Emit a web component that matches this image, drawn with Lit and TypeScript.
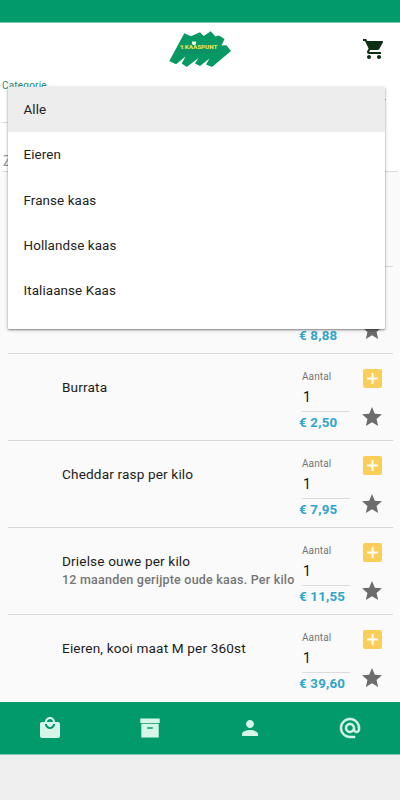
import { LitElement, html, css, svg } from "lit";
import { customElement, property } from "lit/decorators.js";

const icons = {
  cart: svg`<path d="M7 18c-1.1 0-1.99.9-1.99 2S5.900 22 7 22s2-.9 2-2-.9-2-2-2zM1 2v2h2l3.600 7.590-1.350 2.450c-.16.28-.25.61-.25.960 0 1.100.9 2 2 2h12v-2H7.420c-.14 0-.25-.11-.25-.25l.03-.12.900-1.630h7.450c.75 0 1.410-.41 1.750-1.030l3.580-6.490A1 1 0 0 0 20 4H5.210l-.94-2H1zm16 16c-1.100 0-1.990.9-1.990 2s.89 2 1.990 2 2-.9 2-2-.9-2-2-2z"/>`,
  bag: svg`<path d="M20 6h-3c0-2.760-2.240-5-5-5S7 3.240 7 6H4c-1.100 0-1.990.9-1.990 2v12c0 1.100.9 2 2 2h16c1.100 0 2-.9 2-2V8c0-1.100-.9-2-2-2zm-8-3c1.660 0 3 1.340 3 3H9c0-1.660 1.340-3 3-3zm0 10c-2.760 0-5-2.240-5-5h2c0 1.660 1.340 3 3 3s3-1.340 3-3h2c0 2.760-2.240 5-5 5z"/>`,
  archive: svg`<path d="M2.300 2.500h19.400v4.600H2.300zM3.300 7.700v13.800h17.400V7.700zm11.500 5H9.200v-1.500h5.600z"/>`,
  person: svg`<path d="M12 12c2.210 0 4-1.790 4-4s-1.790-4-4-4-4 1.790-4 4 1.790 4 4 4zm0 2c-2.670 0-8 1.340-8 4v2h16v-2c0-2.660-5.330-4-8-4z"/>`,
  at: svg`<path stroke="#d5f5e9" stroke-width=".5" d="M12 1.950C6.480 1.950 2 6.430 2 11.950s4.480 10 10 10h5v-2h-5c-4.340 0-8-3.660-8-8s3.660-8 8-8 8 3.660 8 8v1.430c0 .79-.71 1.570-1.500 1.570s-1.500-.78-1.500-1.570v-1.430c0-2.760-2.240-5-5-5s-5 2.240-5 5 2.240 5 5 5c1.380 0 2.640-.56 3.540-1.470.65.89 1.770 1.470 2.960 1.470 1.970 0 3.500-1.600 3.500-3.570v-1.430c0-5.520-4.480-10-10-10zm0 13c-1.660 0-3-1.340-3-3s1.340-3 3-3 3 1.340 3 3-1.340 3-3 3z"/>`,
  star: svg`<path d="M12 17.270 18.180 21l-1.640-7.030L22 9.240l-7.190-.61L12 2 9.190 8.630 2 9.240l5.460 4.730L5.820 21z"/>`,
};

@customElement("product-row")
class ProductRow extends LitElement {
  @property() name = "";
  @property() note = "";
  @property() price = "";

  static styles = css`
    :host { display: flex; box-sizing: border-box; height: 87px; margin: 0 7px 0 8px; border-bottom: 1px solid #d9d9d9; }
    :host(:last-child) { border-bottom-color: transparent; }
    .info { width: 246px; padding: 24px 0 0 54px; box-sizing: border-box; white-space: nowrap; }
    .name { font-size: 13.600px; line-height: 19px; color: #1c1c1c; letter-spacing: .150px; }
    .note { font-size: 12.500px; line-height: 18px; font-weight: 500; color: #757575; letter-spacing: .220px; }
    .amount { width: 48px; margin: 17px 0 0 48px; }
    .label { font-size: 10px; line-height: 12px; color: #757575; letter-spacing: .1px; }
    .value { font-size: 14px; line-height: 18px; padding: 5px 0 5px 1px; border-bottom: 1px solid #dcdce0; color: #111; }
    .price { margin: 0 0 0 -3px; font-size: 13.300px; line-height: 21px; font-weight: 700; color: #30a5c9; white-space: nowrap; letter-spacing: .2px; }
    .actions { display: flex; flex-direction: column; align-items: center; width: 24px; margin: 15px 0 0 10px; gap: 16.500px; }
    .add { width: 19px; height: 19px; margin-left: 1px; border-radius: 2px; background: #fbcd59; display: block; }
    .star { width: 24px; height: 24px; fill: #6c6c6c; }
  `;

  render() {
    return html`
      <div class="info">
        <div class="name">${this.name}</div>
        <div class="note">${this.note}</div>
      </div>
      <div class="amount">
        <div class="label">Aantal</div>
        <div class="value">1</div>
        <div class="price">€ ${this.price}</div>
      </div>
      <div class="actions">
        <svg class="add" viewBox="0 0 19 19"><path d="M9.500 4v11M4 9.500h11" stroke="#fff" stroke-width="2"/></svg>
        <svg class="star" viewBox="0 0 24 24">${icons.star}</svg>
      </div>`;
  }
}

@customElement("app-root")
class AppRoot extends LitElement {
  static styles = css`
    :host { display: flex; flex-direction: column; position: relative; height: 800px; overflow: hidden; background: #efefef; font-family: Roboto, "Liberation Sans", sans-serif; }
    .status { height: 22px; flex: none; background: #039a6b; border-bottom: 1px solid #7fc9b2; }
    header { height: 52px; flex: none; background: #fff; display: grid; grid-template-columns: 1fr 64px 1fr; align-items: center; }
    .logo { grid-column: 2; width: 64px; height: 40px; }
    .cart { width: 24px; height: 24px; justify-self: end; margin-right: 14px; fill: #0d2f12; }
    .filters { height: 97px; flex: none; background: #fff; padding: 0 2px; box-sizing: border-box; }
    .category { height: 48px; width: 382px; box-sizing: border-box; border-bottom: 1px solid #dedede; font-size: 10px; line-height: 12px; padding-top: 5px; color: #25896f; letter-spacing: .2px; display: flex; justify-content: space-between; }
    .arrow { width: 10px; height: 5px; fill: #666; margin: 19px -2px 0 0; }
    .search { height: 49px; box-sizing: border-box; border-bottom: 1px solid #dedede; font-size: 14px; padding: 29px 0 0 1px; line-height: 18px; color: #999; }
    .list { flex: none; height: 531px; box-sizing: border-box; padding-top: 9px; margin-top: -1px; overflow: hidden; background: linear-gradient(transparent 1px, #fafafa 1px); }
    nav { height: 52px; flex: none; background: #039a6b; border-bottom: 1px solid #7fc9b2; display: grid; grid-template-columns: repeat(4, 1fr); place-items: center; }
    nav svg { width: 24px; height: 24px; fill: #d5f5e9; }
    .menu { position: absolute; left: 8px; top: 87px; width: 377px; height: 242px; background: #fff; border-radius: 1px; box-shadow: 0 1px 2px rgba(0,0,0,.4), 0 1px 4px rgba(0,0,0,.16); overflow: hidden; }
    .option { height: 45.300px; box-sizing: border-box; padding-left: 15.500px; line-height: 45px; font-size: 13.400px; color: #222; letter-spacing: .1px; }
    .selected { background: #ededed; }
  `;

  private products = [
    ["", "", ""],
    ["", "", "8,88"],
    ["Burrata", "", "2,50"],
    ["Cheddar rasp per kilo", "", "7,95"],
    ["Drielse ouwe per kilo", "12 maanden gerijpte oude kaas. Per kilo", "11,55"],
    ["Eieren, kooi maat M per 360st", "", "39,60"],
  ];

  private options = ["Alle", "Eieren", "Franse kaas", "Hollandse kaas", "Italiaanse Kaas"];

  render() {
    return html`
      <div class="status"></div>
      <header>
        <svg class="logo" viewBox="0 0 64 40">
          <path fill="#079963" d="M16.300 4.300 23 7.300 32 3.300 35.700 7 42.700 2.300 47.500 7.500 51 6.500 56.500 10 53.500 16.500 58.500 16.300 63 22 44 38 38 35.500 41.500 29.500 32 37 27 34.500 30.500 29 18.700 38 13.700 34.500 17.500 27.500 8 35.300 1.300 32Z"/>
          <text x="12" y="19.500" font-size="5.800" font-weight="900" fill="#dfe34e" textLength="37.500" lengthAdjust="spacingAndGlyphs">'t KAASPUNT</text>
          <path d="M24 12.500h4v2.500l-1 1h-2l-1-1z" fill="#eff8dc"/>
          <path d="M12 22h38M13 24h32" stroke="#167f68" stroke-width=".8" stroke-dasharray="3 1"/>
        </svg>
        <svg class="cart" viewBox="0 0 24 24">${icons.cart}</svg>
      </header>
      <div class="filters">
        <div class="category">Categorie<svg class="arrow" viewBox="0 0 10 5"><path d="M0 0h10L5 5z"/></svg></div>
        <div class="search">Z</div>
      </div>
      <div class="list">
        ${this.products.map(([n, o, p]) => html`<product-row .name=${n} .note=${o} .price=${p}></product-row>`)}
      </div>
      <nav>
        ${[icons.bag, icons.archive, icons.person, icons.at].map((i) => html`<svg viewBox="0 0 24 24">${i}</svg>`)}
      </nav>
      <div class="menu">
        ${this.options.map((o, i) => html`<div class="option ${i === 0 ? "selected" : ""}">${o}</div>`)}
      </div>`;
  }
}
